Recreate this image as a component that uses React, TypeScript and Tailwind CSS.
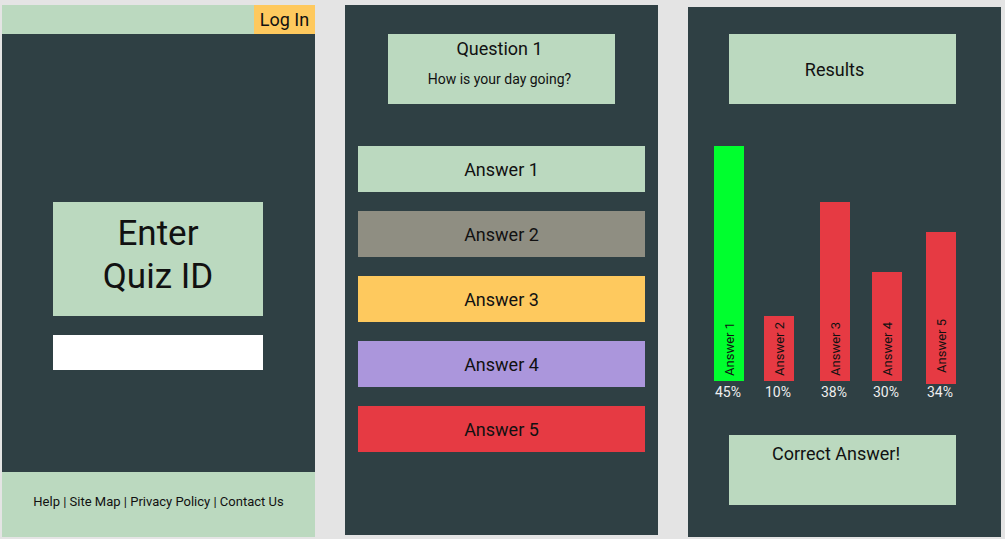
const answers = [
  { label: 'Answer 1', bg: 'bg-[#bbd9bf]' },
  { label: 'Answer 2', bg: 'bg-[#8f8e82]' },
  { label: 'Answer 3', bg: 'bg-[#fec95e]' },
  { label: 'Answer 4', bg: 'bg-[#ab96dc]' },
  { label: 'Answer 5', bg: 'bg-[#e63a43]' },
];

const bars = [
  { label: 'Answer 1', pct: '45%', h: 235, color: 'bg-[#00ff2e]', ml: 'ml-[26px]', pb: 'pb-[5px]', extra: '' },
  { label: 'Answer 2', pct: '10%', h: 65, color: 'bg-[#e63a43]', ml: 'ml-[20px]', pb: 'pb-[5px]', extra: '' },
  { label: 'Answer 3', pct: '38%', h: 179, color: 'bg-[#e63a43]', ml: 'ml-[26px]', pb: 'pb-[5px]', extra: '' },
  { label: 'Answer 4', pct: '30%', h: 109, color: 'bg-[#e63a43]', ml: 'ml-[22px]', pb: 'pb-[5px]', extra: '' },
  { label: 'Answer 5', pct: '34%', h: 152, color: 'bg-[#e63a43]', ml: 'ml-[24px]', pb: 'pb-[11px]', extra: 'mb-[-3px]' },
];

function EnterPanel() {
  return (
    <div className="flex h-[532px] w-[313px] flex-col bg-[#2f4044]">
      {/* top bar */}
      <div className="flex h-[29px] justify-end bg-[#bbd9bf]">
        <button className="flex w-[61px] items-center justify-center bg-[#fec95e] text-[18px] leading-[29px] text-[#111]">
          Log In
        </button>
      </div>

      <div className="flex flex-1 flex-col items-center pt-[168px] pr-[1px]">
        <div className="h-[114px] w-[210px] bg-[#bbd9bf] pt-[10px] text-center text-[35px] leading-[43px] text-[#111]">
          Enter
          <br />
          Quiz ID
        </div>
        <input type="text" className="mt-[19px] h-[35px] w-[210px] bg-white outline-none" />
      </div>

      {/* footer */}
      <div className="h-[65px] bg-[#bbd9bf] pt-[22px] text-center text-[13px] leading-[15px] text-[#111]">
        Help | Site Map | Privacy Policy | Contact Us
      </div>
    </div>
  );
}

function QuestionPanel() {
  return (
    <div className="flex h-[530px] w-[313px] flex-col items-center bg-[#2f4044] pt-[29px]">
      <div className="h-[70px] w-[227px] bg-[#bbd9bf] pt-[4px] pr-[4px] text-center text-[#111]">
        <div className="text-[18px] leading-[21px]">Question 1</div>
        <div className="mt-[12px] text-[14px] leading-[16px]">How is your day going?</div>
      </div>

      <div className="mt-[42px] flex flex-col gap-[19px]">
        {answers.map((a) => (
          <div
            key={a.label}
            className={`flex h-[46px] w-[287px] items-center justify-center ${a.bg} text-[18px] leading-[21px] text-[#111]`}
          >
            {a.label}
          </div>
        ))}
      </div>
    </div>
  );
}

function ResultsPanel() {
  return (
    <div className="mt-[2px] flex h-[530px] w-[313px] flex-col bg-[#2f4044] pt-[27px]">
      <div className="ml-[41px] flex h-[70px] w-[227px] items-center justify-center bg-[#bbd9bf] pr-[16px] text-[18px] leading-[21px] text-[#111]">
        Results
      </div>

      {/* chart */}
      <div className="mt-[42px] flex items-end">
        {bars.map((b) => (
          <div key={b.label} className={`flex w-[30px] flex-col items-center ${b.ml}`}>
            <div
              className={`flex w-[30px] flex-col items-center justify-end ${b.color} ${b.pb} ${b.extra}`}
              style={{ height: b.h }}
            >
              <span className="rotate-180 text-[13px] leading-[15px] whitespace-nowrap text-[#111] [writing-mode:vertical-rl]">
                {b.label}
              </span>
            </div>
            <div className="mt-[3px] pr-[2px] text-[14px] leading-[16px] whitespace-nowrap text-[#eee]">{b.pct}</div>
          </div>
        ))}
      </div>

      <div className="mt-[35px] ml-[41px] h-[70px] w-[227px] bg-[#bbd9bf] pt-[8px] pr-[13px] text-center text-[18px] leading-[21px] text-[#111]">
        Correct Answer!
      </div>
    </div>
  );
}

export default function App() {
  return (
    <div className="flex h-[539px] w-[1005px] items-start gap-[30px] bg-[#e4e4e4] pt-[5px] pl-[2px] font-['Roboto',sans-serif]">
      <EnterPanel />
      <QuestionPanel />
      <ResultsPanel />
    </div>
  );
}
